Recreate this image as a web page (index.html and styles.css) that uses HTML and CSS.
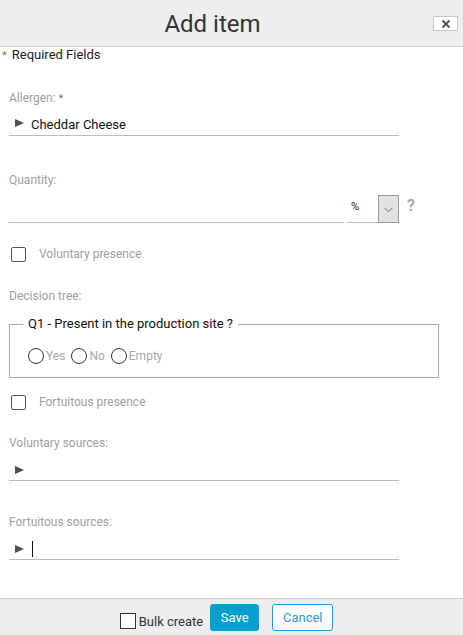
FILE: index.html
```html
<!DOCTYPE html>
<html>
<head>
<meta charset="utf-8">
<link rel="stylesheet" href="styles.css">
</head>
<body>
<div class="dialog">
  <div class="header">
    <div class="title">Add item</div>
    <button class="close" aria-label="Close">
      <svg width="10" height="10" viewBox="0 0 10 10"><path d="M1.5 1.5 L8.5 8.5 M8.5 1.5 L1.5 8.5" stroke="#555" stroke-width="2" stroke-linecap="butt"/></svg>
    </button>
  </div>
  <div class="content">
    <div class="required"><span class="star star-req">*</span>Required Fields</div>

    <div class="label label-first">Allergen: <span class="star">*</span></div>
    <div class="tree-input">
      <span class="tri"></span><span class="value">Cheddar Cheese</span>
    </div>

    <div class="label label-qty">Quantity:</div>
    <div class="qty-row">
      <div class="qty-input"></div>
      <div class="unit-select">
        <div class="unit-value">%</div>
        <div class="unit-btn">
          <svg width="9" height="6" viewBox="0 0 9 6"><path d="M0.5 0.8 L4.5 4.8 L8.5 0.8" fill="none" stroke="#666" stroke-width="1"/></svg>
        </div>
      </div>
      <div class="help">?</div>
    </div>

    <label class="check-row check-vol"><span class="box"></span><span class="check-label">Voluntary presence</span></label>

    <div class="label label-tree">Decision tree:</div>
    <fieldset class="q-set">
      <legend>Q1 - Present in the production site ?</legend>
      <div class="radios">
        <span class="radio"></span><span class="radio-label">Yes</span>
        <span class="radio"></span><span class="radio-label">No</span>
        <span class="radio"></span><span class="radio-label">Empty</span>
      </div>
    </fieldset>

    <label class="check-row check-fort"><span class="box"></span><span class="check-label">Fortuitous presence</span></label>

    <div class="label label-vs">Voluntary sources:</div>
    <div class="tree-input tree-src">
      <span class="tri"></span>
    </div>

    <div class="label label-fs">Fortuitous sources:</div>
    <div class="tree-input tree-src">
      <span class="tri"></span><span class="caret"></span>
    </div>
  </div>
  <div class="footer">
    <label class="bulk"><span class="bulk-box"></span><span class="bulk-label">Bulk create</span></label>
    <button class="btn btn-save">Save</button>
    <button class="btn btn-cancel">Cancel</button>
  </div>
</div>
</body>
</html>
```
FILE: styles.css
```css
* { box-sizing: border-box; }
html, body { margin: 0; padding: 0; }
body {
  font-family: Roboto, "Liberation Sans", Arial, sans-serif;
  background: #fff;
  color: #222;
}
.dialog {
  width: 463px;
  height: 635px;
  display: flex;
  flex-direction: column;
}
.header {
  height: 47px;
  background: #eeeeee;
  border-bottom: 1px solid #cfcfcf;
  display: flex;
  align-items: center;
  position: relative;
}
.title {
  flex: 1;
  text-align: center;
  font-size: 24px;
  color: #333;
  padding-right: 38px;
  padding-top: 1px;
}
.close {
  position: absolute;
  right: 5px;
  top: 16px;
  width: 25px;
  height: 15px;
  background: #fff;
  border: 1px solid #c8c8c8;
  padding: 0;
  display: flex;
  align-items: center;
  justify-content: center;
}
.content {
  flex: 1;
  padding-left: 9px;
}
.required {
  font-size: 13px;
  line-height: 16px;
  margin-top: 0px;
  margin-left: -7px;
  color: #222;
}
.star { color: #4a9a3a; font-size: 11px; }
.star-req { margin-right: 5px; }
.label {
  font-size: 12px;
  line-height: 16px;
  color: #a0a0a0;
}
.label-first { margin-top: 26px; }
.tree-input {
  width: 390px;
  height: 23px;
  margin-top: 6px;
  border-bottom: 1px solid #bdbdbd;
  display: flex;
  align-items: center;
  padding-top: 1px;
  padding-left: 6px;
}
.tri {
  width: 0;
  height: 0;
  border-top: 4.5px solid transparent;
  border-bottom: 4.5px solid transparent;
  border-left: 9px solid #4a4d55;
  margin-top: -3px;
}
.value {
  font-size: 13px;
  color: #111;
  margin-left: 7px;
}
.label-qty { margin-top: 36px; }
.qty-row {
  display: flex;
  align-items: flex-end;
  margin-top: 7px;
  height: 28px;
}
.qty-input {
  width: 335px;
  height: 28px;
  border-bottom: 1px solid #bdbdbd;
}
.unit-select {
  display: flex;
  margin-left: 3px;
  height: 28px;
}
.unit-value {
  width: 31px;
  height: 28px;
  border-bottom: 1px solid #bdbdbd;
  font-size: 11px;
  padding-left: 4px;
  padding-top: 5px;
  color: #222;
}
.unit-btn {
  width: 21px;
  height: 28px;
  background: #e2e2e2;
  border: 1px solid #9a9a9a;
  display: flex;
  align-items: center;
  justify-content: center;
  padding-top: 1px;
}
.help {
  align-self: flex-start;
  margin-left: 8px;
  font-size: 16px;
  font-weight: bold;
  color: #a8a8a8;
  line-height: 20px;
  padding-top: 1px;
}
.check-row {
  display: flex;
  align-items: center;
  height: 16px;
}
.check-vol { margin-top: 23px; }
.check-fort { margin-top: 16px; }
.box {
  width: 15px;
  height: 15px;
  border: 1px solid #555;
  border-radius: 2px;
  margin-left: 2px;
  background: #fff;
}
.check-label {
  font-size: 12px;
  color: #a0a0a0;
  margin-left: 13px;
}
.label-tree { margin-top: 26px; }
.q-set {
  width: 430px;
  margin: 12px 0 0 0;
  padding: 0 0 13px 13px;
  border: 1px solid #aaaaaa;
}
.q-set legend {
  padding: 0 5px;
  font-size: 13px;
  line-height: 16px;
  color: #111;
}
.radios {
  display: flex;
  align-items: center;
  margin-top: 16px;
  height: 16px;
  padding-left: 5px;
}
.radio {
  width: 16px;
  height: 16px;
  border: 1px solid #333;
  border-radius: 50%;
  background: #fff;
}
.radio-label {
  font-size: 12px;
  color: #a8a8a8;
  margin-left: 2px;
  margin-right: 6px;
}
.label-vs { margin-top: 25px; }
.label-fs { margin-top: 33px; }
.tree-src { margin-top: 7px; }
.tree-src .tri { margin-top: 0; }
.caret {
  width: 1px;
  height: 16px;
  background: #111;
  margin-left: 8px;
}
.footer {
  height: 37px;
  background: #eeeeee;
  border-top: 1px solid #cfcfcf;
  display: flex;
  align-items: center;
  justify-content: center;
  padding-right: 10px;
  padding-top: 1px;
}
.bulk {
  display: flex;
  align-items: flex-end;
  margin-top: 6px;
}
.bulk-box {
  width: 16px;
  height: 16px;
  border: 1px solid #333;
  background: #fff;
}
.bulk-label {
  font-size: 13px;
  color: #333;
  margin-left: 3px;
  line-height: 15px;
}
.btn {
  font-family: Roboto, "Liberation Sans", Arial, sans-serif;
  font-size: 13px;
  height: 27px;
  border-radius: 3px;
  padding: 0;
}
.btn-save {
  width: 49px;
  margin-left: 7px;
  background: #029fd0;
  border: 1px solid #029fd0;
  color: #fff;
}
.btn-cancel {
  width: 61px;
  margin-left: 13px;
  background: #fff;
  border: 1px solid #1e9ad6;
  color: #2a9bd4;
}
```
